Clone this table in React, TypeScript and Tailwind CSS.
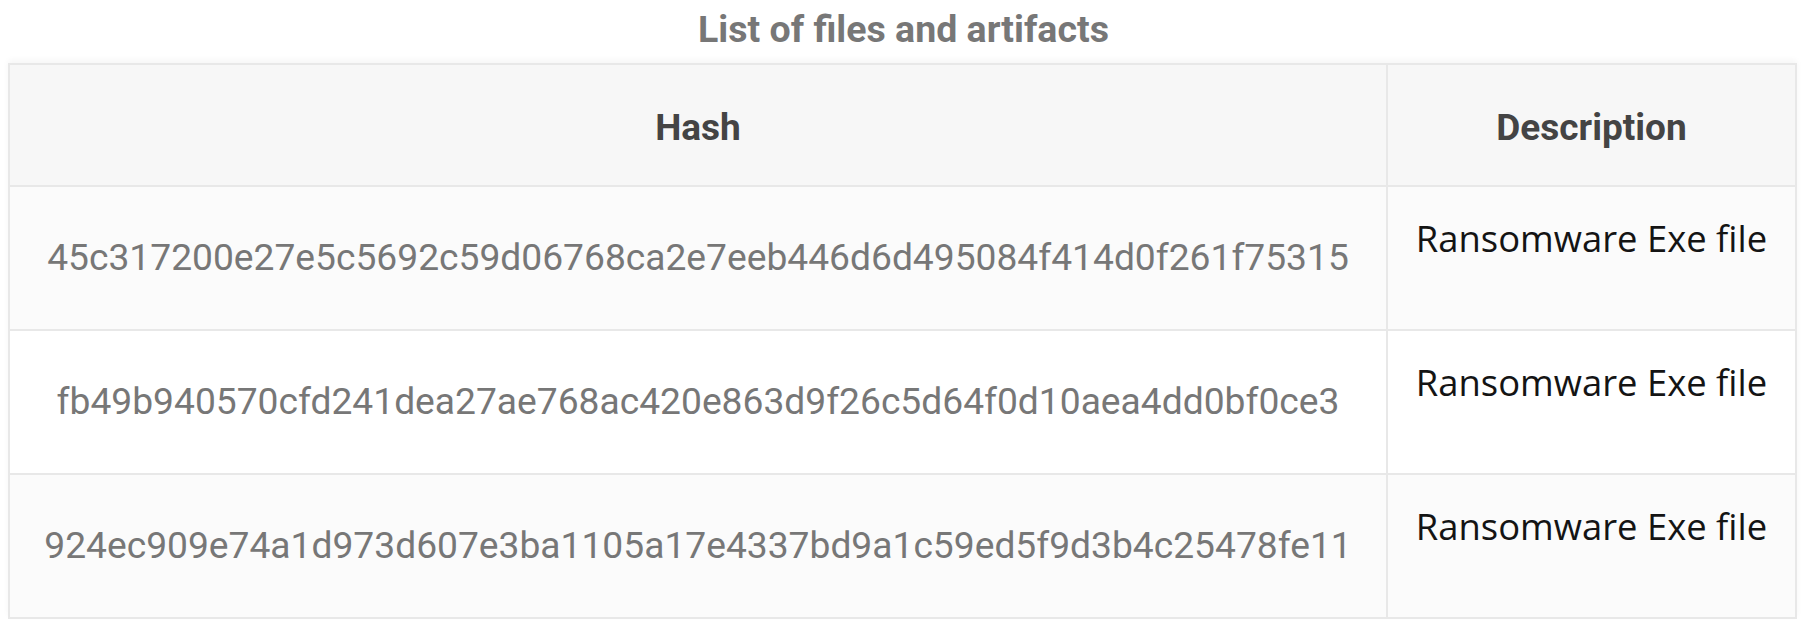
const rows = [
  "45c317200e27e5c5692c59d06768ca2e7eeb446d6d495084f414d0f261f75315",
  "fb49b940570cfd241dea27ae768ac420e863d9f26c5d64f0d10aea4dd0bf0ce3",
  "924ec909e74a1d973d607e3ba1105a17e4337bd9a1c59ed5f9d3b4c25478fe11",
];

export default function App() {
  return (
    <div className="min-h-screen bg-white px-2 font-['Roboto',_'Liberation_Sans',_sans-serif]">
      <h2 className="h-[63px] pt-[6px] text-center text-[37.5px] font-bold leading-[46px] text-[#777777]">
        List of files and artifacts
      </h2>
      <table className="w-[1789px] table-fixed border-collapse shadow-[0_-3px_6px_rgba(0,0,0,0.04)]">
        <colgroup>
          <col className="w-[1378px]" />
          <col />
        </colgroup>
        <thead>
          <tr className="bg-[#f7f7f7]">
            <th className="h-[122px] border-2 border-[#e8e8e8] pt-[5px] text-center align-middle text-[37px] font-bold text-[#444444]">
              Hash
            </th>
            <th className="h-[122px] border-2 border-[#e8e8e8] pt-[5px] text-center align-middle text-[37px] font-bold text-[#444444]">
              Description
            </th>
          </tr>
        </thead>
        <tbody>
          {rows.map((hash, i) => (
            <tr key={hash} className={i % 2 === 0 ? "bg-[#fbfbfb]" : "bg-white"}>
              <td className="h-[144px] border-2 border-[#e8e8e8] text-center align-middle text-[37.2px] text-[#777777]">
                {hash}
              </td>
              <td className="h-[144px] border-2 border-[#e8e8e8] pt-[27px] text-center align-top font-['Open_Sans',_sans-serif] text-[36.4px] leading-[48px] text-[#141414]">
                Ransomware Exe file
              </td>
            </tr>
          ))}
        </tbody>
      </table>
    </div>
  );
}
